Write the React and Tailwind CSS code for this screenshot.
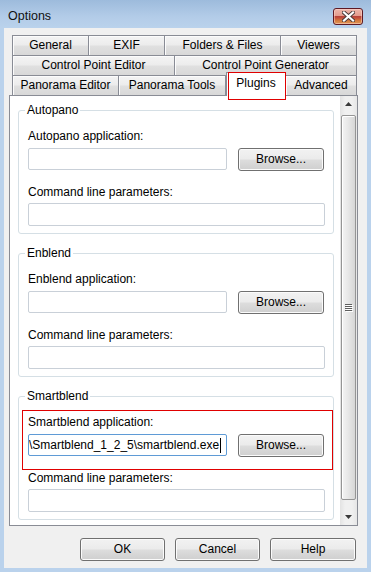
import React from "react";

const btnBg =
  "bg-[linear-gradient(to_bottom,#f2f2f2_0%,#ebebeb_48%,#dddddd_52%,#cfcfcf_100%)] shadow-[inset_0_0_0_1px_#fbfbfb]";
const tabBg =
  "bg-[linear-gradient(to_bottom,#f4f4f4_0%,#ececec_48%,#e0e0e0_52%,#d8d8d8_100%)] shadow-[inset_1px_1px_0_#fcfcfc]";

function Group({ title, app, value, focused, highlight }) {
  return (
    <div className="relative h-[124px] shrink-0 rounded-[3px] border border-[#d5dfe5] flex flex-col px-[9px]">
      <div className="-mt-[8px] -ml-[3px] w-fit bg-white px-[2px] leading-[15px] h-[15px]">{title}</div>
      <div className="mt-[11px] leading-[15px] h-[15px]">{app}</div>
      <div className="mt-[4px] flex items-start">
        <div
          className={
            "h-[22px] w-[199px] rounded-[2px] border bg-white flex items-center overflow-hidden " +
            (focused ? "border-[#5f9bd6]" : "border-[#c9d0d8]")
          }
        >
          {value ? (
            <div className="flex items-center whitespace-nowrap leading-[15px] pl-[0px]">
              <span>{value}</span>
              <span className="ml-[1px] inline-block h-[15px] w-[1px] bg-black" />
            </div>
          ) : null}
        </div>
        <button
          className={
            "ml-[11px] h-[23px] w-[86px] rounded-[3px] border border-[#707070] leading-[15px] " + btnBg
          }
        >
          Browse...
        </button>
      </div>
      <div className="mt-[14px] leading-[15px] h-[15px]">Command line parameters:</div>
      <div className="mt-[3px] h-[23px] w-[297px] rounded-[2px] border border-[#c9d0d8] bg-white" />
      {highlight ? (
        <div className="pointer-events-none absolute left-[3px] top-[13px] h-[60px] w-[311px] border border-[#e00000]" />
      ) : null}
    </div>
  );
}

function Tab({ className, children }) {
  return (
    <div
      className={
        "h-[20px] flex items-center justify-center border-t border-r border-[#898c95] leading-[15px] whitespace-nowrap " +
        tabBg +
        " " +
        className
      }
    >
      {children}
    </div>
  );
}

function Arrow({ down }) {
  return (
    <svg width="7" height="4" viewBox="0 0 7 4">
      <path d={down ? "M0 0 L7 0 L3.5 4 Z" : "M0 4 L3.5 0 L7 4 Z"} fill="#3a3a3a" />
    </svg>
  );
}

export default function App() {
  return (
    <div className="w-[371px] h-[572px] flex flex-col bg-[#bad2ec] text-[12px] text-black font-['Liberation_Sans',Arial,sans-serif]">
      {/* Title bar */}
      <div className="h-[28px] shrink-0 flex items-start justify-between pl-[8px] pr-[8px] bg-[linear-gradient(to_bottom,#9dbbdc_0%,#b3cce8_60%,#bad2ec_100%)]">
        <div className="pt-[9px] leading-[15px] text-[12.5px] text-[#111]">Options</div>
        <div className="mt-[8px] h-[17px] w-[30px] rounded-[3px] border border-[#5e1a24] bg-[linear-gradient(to_bottom,#edb5aa_0%,#e49c8e_45%,#b8433a_50%,#c24b3a_58%,#d6803f_80%,#e0955a_100%)] shadow-[inset_0_0_0_1px_rgba(255,220,210,0.5)] flex items-center justify-center">
          <svg width="13" height="11" viewBox="0 0 13 11">
            <path d="M2 1.5 L11 9.5 M11 1.5 L2 9.5" stroke="#4a3a3a" strokeWidth="4" strokeLinecap="square" />
            <path d="M2 1.5 L11 9.5 M11 1.5 L2 9.5" stroke="#ffffff" strokeWidth="2.2" strokeLinecap="square" />
          </svg>
        </div>
      </div>

      {/* Client */}
      <div className="flex-1 mx-[4px] mb-[4px] bg-[#f0f0f0] flex flex-col pt-[7px] pl-[5px] pr-[9px]">
        {/* Tabs */}
        <div className="ml-[3px] w-[345px] flex flex-col">
          <div className="flex">
            <Tab className="w-[77px] border-l">General</Tab>
            <Tab className="w-[76px]">EXIF</Tab>
            <Tab className="w-[116px]">Folders &amp; Files</Tab>
            <Tab className="w-[76px]">Viewers</Tab>
          </div>
          <div className="flex">
            <Tab className="w-[163px] border-l">Control Point Editor</Tab>
            <Tab className="w-[182px]">Control Point Generator</Tab>
          </div>
          <div className="flex items-end h-[20px]">
            <Tab className="w-[107px] border-l">Panorama Editor</Tab>
            <Tab className="w-[107px]">Panorama Tools</Tab>
            <div className="relative z-10 -mb-[1px] h-[24px] w-[60px] shrink-0 bg-white border-l border-t border-r border-[#898c95] flex items-center justify-center pb-[2px] leading-[15px]">
              Plugins
              <div className="pointer-events-none absolute -top-[1px] left-[1px] h-[28px] w-[58px] border border-[#e00000]" />
            </div>
            <Tab className="w-[71px]">Advanced</Tab>
          </div>
        </div>

        {/* Panel */}
        <div className="h-[431px] w-[349px] shrink-0 border border-[#898c95] bg-white flex">
          <div className="flex-1 flex flex-col gap-[19px] pt-[14px] pl-[8px] pr-[6px] overflow-hidden">
            <Group title="Autopano" app="Autopano application:" />
            <Group title="Enblend" app="Enblend application:" />
            <Group
              title="Smartblend"
              app="Smartblend application:"
              value="\Smartblend_1_2_5\smartblend.exe"
              focused
              highlight
            />
          </div>
          {/* Scrollbar */}
          <div className="w-[17px] shrink-0 flex flex-col bg-[linear-gradient(to_right,#e3e3e3_0%,#f0f0f0_30%,#f0f0f0_70%,#e6e6e6_100%)]">
            <div className="h-[17px] flex items-center justify-center pb-[1px]">
              <Arrow />
            </div>
            <div className="flex-1 flex flex-col px-[1px]">
              <div className="mt-[2px] h-[385px] rounded-[2px] border border-[#959595] bg-[linear-gradient(to_right,#f4f4f4_0%,#e8e8e8_45%,#d6d6d6_100%)] shadow-[inset_1px_1px_0_#ffffff] flex items-center justify-center">
                <svg width="8" height="8" viewBox="0 0 8 8">
                  <path d="M0 0.5 H7 M0 2.5 H7 M0 4.5 H7 M0 6.5 H7" stroke="#5e5e5e" strokeWidth="1" />
                  <path d="M1 1.5 H8 M1 3.5 H8 M1 5.5 H8 M1 7.5 H8" stroke="#ffffff" strokeWidth="1" />
                </svg>
              </div>
            </div>
            <div className="h-[17px] flex items-center justify-center">
              <Arrow down />
            </div>
          </div>
        </div>

        {/* Buttons */}
        <div className="mt-[12px] flex justify-end pr-[2px] gap-[10px]">
          <button className={"h-[23px] w-[85px] rounded-[3px] border border-[#707070] leading-[15px] " + btnBg}>OK</button>
          <button className={"h-[23px] w-[85px] rounded-[3px] border border-[#707070] leading-[15px] " + btnBg}>Cancel</button>
          <button className={"h-[23px] w-[86px] rounded-[3px] border border-[#707070] leading-[15px] " + btnBg}>Help</button>
        </div>
      </div>
    </div>
  );
}
